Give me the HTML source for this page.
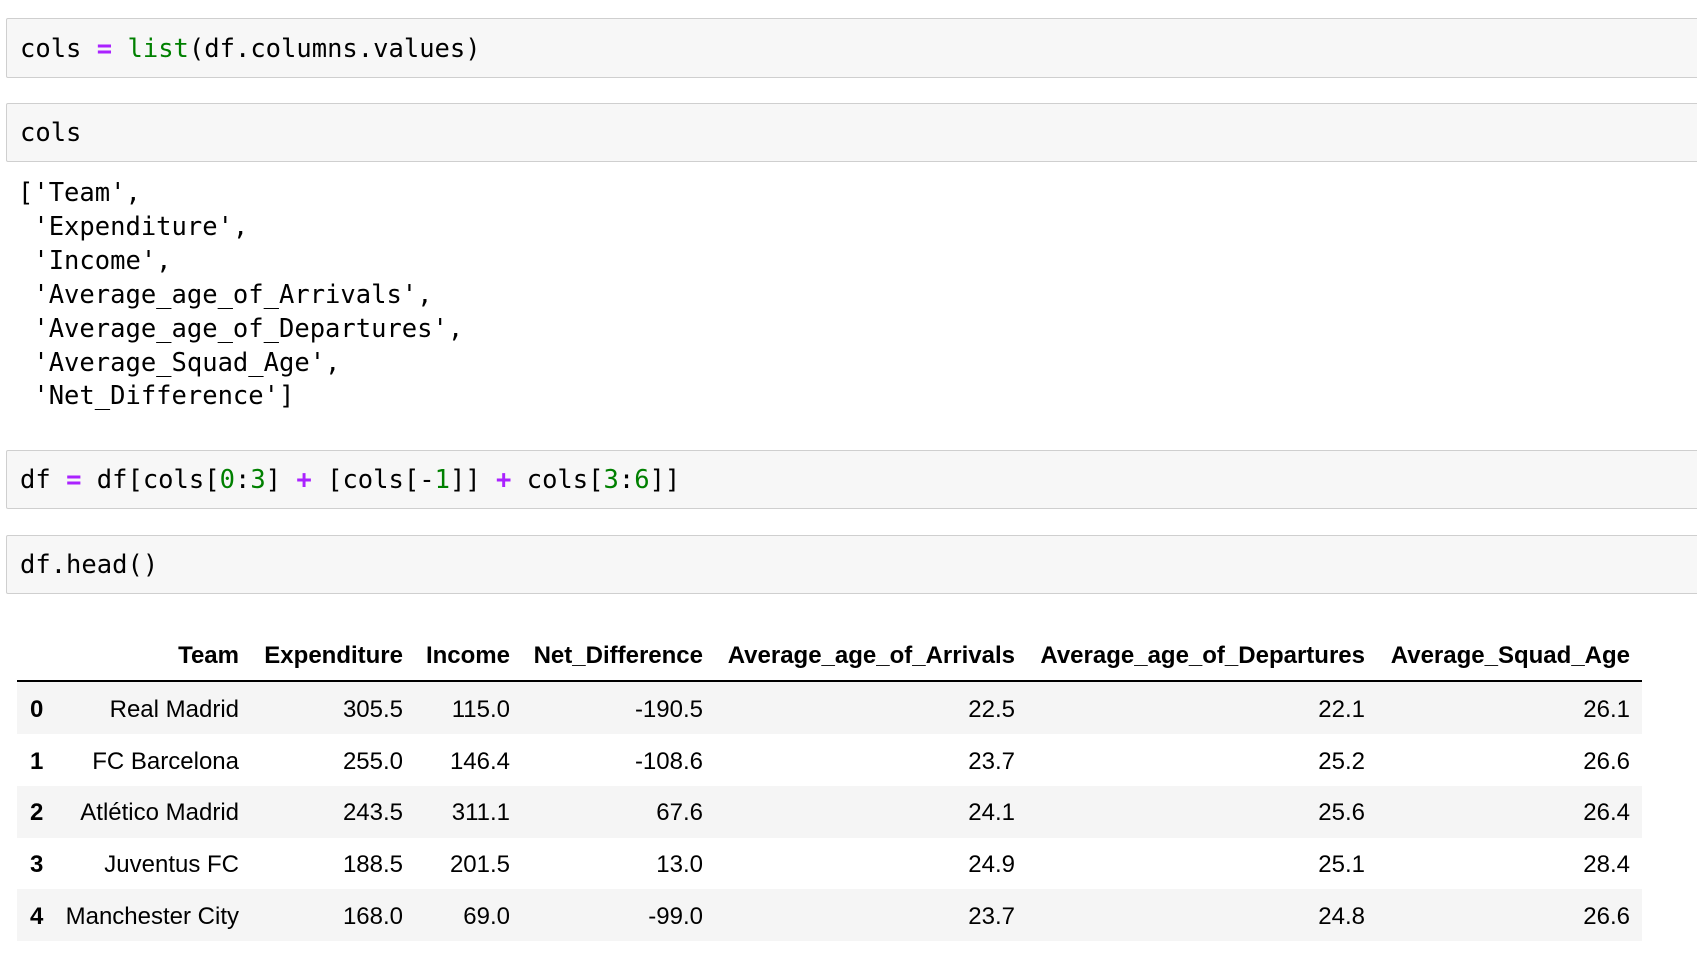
<!DOCTYPE html>
<html><head><meta charset="utf-8"><style>
body{margin:0;width:1697px;height:967px;background:#fff;position:relative;overflow:hidden}
.cell{position:absolute;left:6px;width:1720px;background:#f7f7f7;border:1px solid #cfcfcf;border-radius:2px;box-sizing:border-box}
.mono{font-family:"DejaVu Sans Mono","Liberation Mono",monospace;font-size:25.5px;color:#000;white-space:pre;position:absolute;left:19px}
.k{color:#aa22ff;font-weight:bold}.g{color:#008000}
.out{position:absolute;left:18px;top:177px;line-height:33.9px}
.t{position:absolute;font-family:"Liberation Sans",Arial,sans-serif;font-size:24px;color:#000;white-space:nowrap}
.b{font-weight:bold}
.row{position:absolute;left:17px;width:1625px;background:#f5f5f5}
</style></head><body>
<div class="cell" style="top:18px;height:60px"><div class="mono" style="top:15px;left:13px">cols <span class="k">=</span> <span class="g">list</span>(df.columns.values)</div></div>
<div class="cell" style="top:103px;height:59px"><div class="mono" style="top:14px;left:13px">cols</div></div>
<div class="mono out">['Team',
 'Expenditure',
 'Income',
 'Average_age_of_Arrivals',
 'Average_age_of_Departures',
 'Average_Squad_Age',
 'Net_Difference']</div>
<div class="cell" style="top:450px;height:59px"><div class="mono" style="top:14px;left:13px">df <span class="k">=</span> df[cols[<span class="g">0</span>:<span class="g">3</span>] <span class="k">+</span> [cols[<span class="k" style="font-weight:normal;color:#000">-</span><span class="g">1</span>]] <span class="k">+</span> cols[<span class="g">3</span>:<span class="g">6</span>]]</div></div>
<div class="cell" style="top:535px;height:59px"><div class="mono" style="top:14px;left:13px">df.head()</div></div>
<div style="position:absolute;left:17px;top:680px;width:1625px;height:2px;background:#000"></div>
<div class="row" style="top:682px;height:52px"></div>
<div class="row" style="top:786px;height:52px"></div>
<div class="row" style="top:889px;height:52px"></div>
<div id="tbl"></div>
<script>
var rights=[239,403,510,703,1015,1365,1630];
var hdr=["Team","Expenditure","Income","Net_Difference","Average_age_of_Arrivals","Average_age_of_Departures","Average_Squad_Age"];
var rows=[["Real Madrid","305.5","115.0","-190.5","22.5","22.1","26.1"],["FC Barcelona","255.0","146.4","-108.6","23.7","25.2","26.6"],["Atlético Madrid","243.5","311.1","67.6","24.1","25.6","26.4"],["Juventus FC","188.5","201.5","13.0","24.9","25.1","28.4"],["Manchester City","168.0","69.0","-99.0","23.7","24.8","26.6"]];
var h="";
function cell(txt,r,y,b){return '<div class="t'+(b?' b':'')+'" style="right:'+(1697-r)+'px;top:'+y+'px">'+txt+'</div>';}
hdr.forEach(function(c,i){h+=cell(c,rights[i],642,1)});
rows.forEach(function(r,j){var y=696+j*51.7;h+='<div class="t b" style="left:30px;top:'+y+'px">'+j+'</div>';r.forEach(function(c,i){h+=cell(c,rights[i],y,0)})});
document.getElementById("tbl").innerHTML=h;
</script>
</body></html>
